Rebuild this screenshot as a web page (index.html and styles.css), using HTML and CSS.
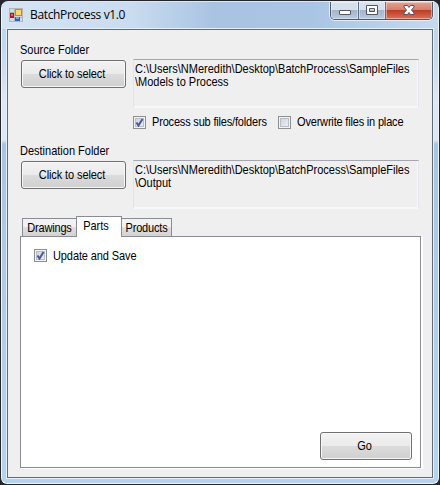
FILE: index.html
```
<!DOCTYPE html>
<html lang="en">
<head>
<meta charset="utf-8">
<title>BatchProcess v1.0</title>
<link rel="stylesheet" href="styles.css">
</head>
<body>
<div class="window">
  <header class="titlebar">
    <svg class="app-icon" width="14" height="14" viewBox="0 0 14 14" shape-rendering="crispEdges">
      <path d="M0.500 0.500h13v13h-13zM0 4.500h6M5.500 0v14M0 9.500h14" fill="#d5d8dc" stroke="#b3b5b8"/>
      <rect x="6" y="1" width="7" height="7" fill="#c98b10"/>
      <rect x="7" y="2" width="5" height="5" fill="#ffd75a"/>
      <rect x="1" y="5" width="4" height="5" fill="#a61b1b"/>
      <rect x="2" y="6" width="2" height="2" fill="#e86450"/>
      <rect x="6" y="9" width="5" height="4" fill="#2c5fc4"/>
      <rect x="7" y="9" width="3" height="2" fill="#78a5f0"/>
    </svg>
    <span class="title">BatchProcess v1.0</span>
    <div class="controls">
      <div class="ctl min"><svg width="14" height="14" viewBox="0 0 14 14"><rect x="1.500" y="7.500" width="11" height="4" rx=".5" fill="#fff" stroke="#535666"/></svg></div>
      <div class="ctl max"><svg width="14" height="14" viewBox="0 0 14 14"><path d="M1.500 2.500h11v9h-11zM4.500 5.500v3h5v-3z" fill="#fff" fill-rule="evenodd" stroke="#535666"/></svg></div>
      <div class="ctl close"><svg width="14" height="14" viewBox="0 0 14 14"><path d="M2 2.500h3.500L7 4.500l1.500-2H12V4L9.500 7l2.500 3v1.500H8.500L7 9.500l-1.500 2H2V10l2.500-3L2 4z" fill="#fff" stroke="#535666"/></svg></div>
    </div>
  </header>
  <main class="client">
    <section class="group">
      <div class="label"><span class="text">Source Folder</span></div>
      <div class="row">
        <button class="btn"><span class="text tight">Click to select</span></button>
        <div class="path"><span class="text">C:\Users\NMeredith\Desktop\BatchProcess\SampleFiles</span><br><span class="text">\Models to Process</span></div>
      </div>
    </section>
    <div class="options">
      <div class="check"><span class="box"><svg width="9" height="9" viewBox="0 0 9 9"><path d="M1.500 4.500l2 3L7.500 1" fill="none" stroke="#45599a" stroke-width="2"/></svg></span><span class="text tighter">Process sub files/folders</span></div>
      <div class="check second"><span class="box"></span><span class="text tighter">Overwrite files in place</span></div>
    </div>
    <section class="group">
      <div class="label"><span class="text">Destination Folder</span></div>
      <div class="row">
        <button class="btn"><span class="text tight">Click to select</span></button>
        <div class="path"><span class="text">C:\Users\NMeredith\Desktop\BatchProcess\SampleFiles</span><br><span class="text">\Output</span></div>
      </div>
    </section>
    <div class="tabs">
      <div class="tab drawings"><span class="text tighter">Drawings</span></div>
      <div class="tab active"><span class="text">Parts</span></div>
      <div class="tab products"><span class="text tighter">Products</span></div>
    </div>
    <section class="panel">
      <div class="check update"><span class="box"><svg width="9" height="9" viewBox="0 0 9 9"><path d="M1.500 4.500l2 3L7.500 1" fill="none" stroke="#45599a" stroke-width="2"/></svg></span><span class="text tight">Update and Save</span></div>
      <button class="btn go"><span class="text">Go</span></button>
    </section>
  </main>
</div>
</body>
</html>
```
FILE: styles.css
```
* { box-sizing: border-box; }
body { margin: 0; padding: 1px 0 0 1px; background: #25262b; font: 11px/13px "Liberation Sans", Arial, sans-serif; color: #000; }
.text { display: inline-block; white-space: nowrap; transform: scaleY(1.1); transform-origin: 50% 80%; }
.tight { letter-spacing: -.1px; }
.tighter { letter-spacing: -.18px; }
.window {
  width: 438px; height: 483px; padding: 0 5px 5px 5px;
  border: 1px solid #eef6fc; border-top-color: #d9e8f4; border-radius: 7px 7px 6px 6px;
  background: linear-gradient(#b9d1ea 0, #c2d8ee 45px, #dce8f5 100px, #dce8f5 138px, #a8c4e2 142px, #b0cae6 260px, #b7d3ec 100%);
}
.titlebar {
  display: flex; height: 27px; margin: 0 -5px; padding-left: 7px;
  border-radius: 6px 6px 0 0;
  background: linear-gradient(90deg, #d4e4f3 0, #c9dcf0 130px, #a9c4e2 210px, #a9c5e4 310px, #c5daef 100%);
}
.app-icon { margin-top: 6px; flex: none; }
.title { margin: 4px 0 0 7px; font: 12px/18px "Open Sans", sans-serif; letter-spacing: -.35px; white-space: nowrap; }
.controls {
  display: flex; height: 18px; margin: 0 5px 0 auto; width: 103px; overflow: hidden;
  border: 1px solid #4d5868; border-top: 0; border-radius: 0 0 5px 5px; box-shadow: 0 0 0 1px #e2edf8;
}
.ctl { display: flex; justify-content: center; padding-top: 1px; width: 28px; border-right: 1px solid #626f82; background: linear-gradient(#d5e0ed 0 45%, #a4b5ca 48%, #b8cbe2); box-shadow: inset 0 0 0 1px #ffffff66; }
.max { width: 27px; }
.close { flex: 1; border: 0; background: linear-gradient(#e1a293 0, #d4806d 45%, #bd3a23 48%, #d57459); }
.client { height: 449px; border: 1px solid #5d6b7b; background: #efefef; padding: 14px 11px 0 12px; box-shadow: 0 0 0 1px #e5f0fa; }
.label { height: 13px; }
.row { display: flex; align-items: flex-start; height: 52px; }
.btn {
  width: 105px; height: 28px; margin: 3px 0 0 1px; padding: 0 3px 0 0; border: 1px solid #707070; border-radius: 3px;
  background: linear-gradient(#f2f2f2 0, #ebebeb 48%, #dcdcdc 50%, #cfcfcf 100%);
  box-shadow: inset 0 0 0 1px #f7f7f7; font: inherit; color: #000;
}
.path { width: 286px; height: 49px; margin: 2px 0 0 7px; padding: 3px 1px; border: 1px solid; border-color: #a5a7b0 #e3e6ee #f5f7fb #e0e3ea; white-space: nowrap; box-shadow: inset -1px -1px #fff8; }
.check { display: flex; align-items: center; height: 13px; white-space: nowrap; }
.box { display: flex; align-items: center; justify-content: center; flex: none; width: 13px; height: 13px; margin-right: 6px; border: 1px solid #8e8f8f; background: linear-gradient(135deg, #c9ced6, #f4f4f5); box-shadow: inset 0 0 0 1px #f4f4f4, inset 0 0 0 2px #b7bdc7; }
.update .text { margin-top: 2px; }
.options { display: flex; height: 36px; padding: 7px 0 0 113px; }
.second { margin-left: auto; width: 143px; }
.tabs { display: flex; align-items: flex-end; height: 26px; padding-left: 2px; }
.tab { height: 18px; display: flex; align-items: center; justify-content: center; padding-top: 1px; border: 1px solid #898c95; border-bottom: 0; background: linear-gradient(#f2f2f2 0 48%, #dfdfdf 50%, #d2d2d2); }
.drawings { width: 54px; border-right: 0; }
.active { width: 46px; height: 21px; margin-bottom: -1px; padding: 0 6px 1px 0; background: #fff; z-index: 1; }
.products { width: 50px; border-left: 0; }
.panel { display: flex; flex-direction: column; justify-content: space-between; width: 401px; height: 232px; padding: 12px 8px 7px 13px; border: 1px solid #898c95; background: #fff; box-shadow: 1px 1px #fff, 2px 1px #fff; }
.go { width: 92px; margin: 0; align-self: flex-end; }
```
